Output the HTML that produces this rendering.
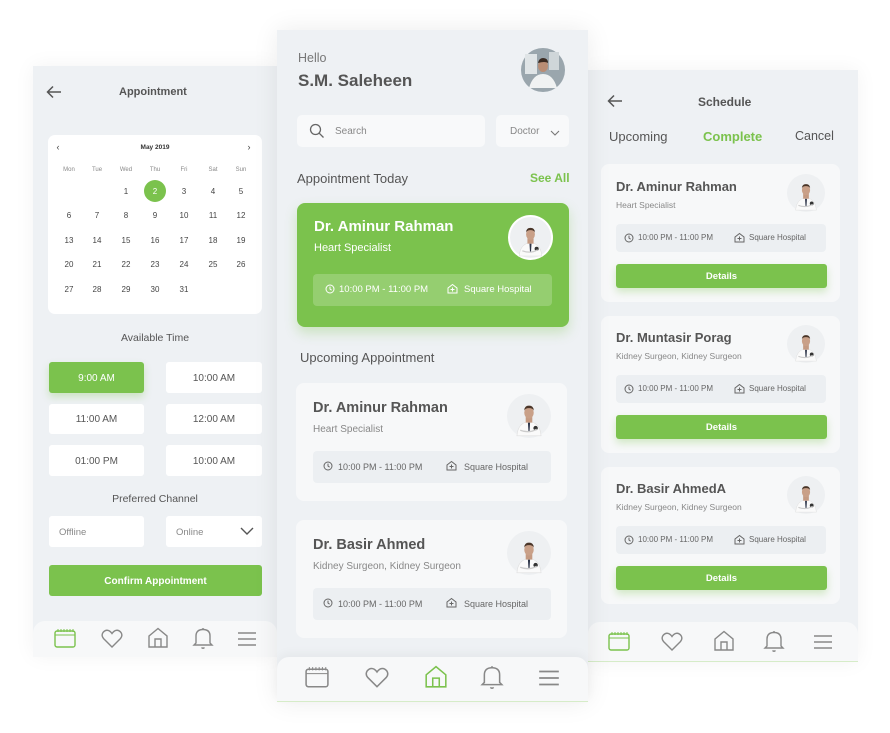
<!DOCTYPE html><html><head><meta charset="utf-8"><style>
*{margin:0;padding:0;box-sizing:border-box}
body{width:890px;height:733px;background:#fff;font-family:"Liberation Sans",sans-serif;color:#555;position:relative;overflow:hidden}
.a{position:absolute}
.panel{position:absolute;background:#eef1f4}
.t{position:absolute;white-space:nowrap}
.w{background:#fff;border-radius:3px;position:absolute}
.g{background:#7bc24d;position:absolute;border-radius:3px;color:#fff;text-align:center;padding-top:2px}
.cal span{position:absolute;width:20px;text-align:center;font-size:8px;color:#444}
.cal .h{font-size:6px;color:#888}
.card{position:absolute;background:#f7f8f9;border-radius:8px}
.box{position:absolute;background:#eceff2;border-radius:4px;font-size:9px;color:#666}
.nav{position:absolute;background:#f7f8f9}
</style></head><body>
<svg width="0" height="0" style="position:absolute"><defs>
<g id="doc"><circle cx="20" cy="20" r="20" fill="#eef0f2"/><path d="M9 38 Q10 26 20 25 Q30 26 31 38 Z" fill="#fafafa" stroke="#ddd" stroke-width=".5"/><path d="M19 26 L21 26 L20.5 34 L19.5 34Z" fill="#2c3448"/><rect x="17" y="21" width="6" height="5" fill="#c49a82"/><ellipse cx="20" cy="17" rx="4.3" ry="5.3" fill="#c9a088"/><path d="M15.6 15 Q16 10.5 20 10.6 Q24 10.5 24.4 15 Q23 12.6 20 12.8 Q17 12.6 15.6 15Z" fill="#4a3528"/><circle cx="26" cy="31" r="2" fill="#333"/><path d="M12 33 Q20 36 27 32" stroke="#ccc" stroke-width="1.2" fill="none"/></g>
<g id="clk"><circle cx="5" cy="5" r="4" fill="none" stroke="currentColor" stroke-width="1"/><path d="M5 2.6V5L6.6 6.2" fill="none" stroke="currentColor" stroke-width="1"/></g>
<g id="hos"><path d="M1 5L5.5 1.5L10 5V10H1Z" fill="none" stroke="currentColor" stroke-width="1"/><path d="M5.5 4.5V8.5M3.5 6.5H7.5" stroke="currentColor" stroke-width="1"/></g>
</defs></svg>

<!-- LEFT PANEL -->
<div class="panel" style="left:33px;top:66px;width:244px;height:590px;box-shadow:0 0 20px rgba(0,0,0,.05)"></div>
<svg class="a" style="left:46px;top:85px" width="16" height="14"><path d="M15 7H2M7 1.5L1.5 7L7 12.5" stroke="#555" stroke-width="1.5" fill="none"/></svg>
<div class="t" style="left:119px;top:86px;font-size:11px;font-weight:bold;color:#555">Appointment</div>
<div class="w cal" style="left:48px;top:135px;width:214px;height:179px;border-radius:7px">
<span style="left:0;top:7px;font-size:9px">‹</span><span style="left:191px;top:7px;font-size:9px">›</span>
<div class="t" style="left:0;width:214px;text-align:center;top:9px;font-size:6.5px;color:#333;font-weight:bold">May 2019</div>
<span class="h" style="left:11px;top:32px">Mon</span><span class="h" style="left:39px;top:32px">Tue</span><span class="h" style="left:68px;top:32px">Wed</span><span class="h" style="left:97px;top:32px">Thu</span><span class="h" style="left:126px;top:32px">Fri</span><span class="h" style="left:155px;top:32px">Sat</span><span class="h" style="left:183px;top:32px">Sun</span>
<div class="a" style="left:96px;top:45px;width:22px;height:22px;border-radius:50%;background:#7bc24d"></div>
<span style="left:68px;top:52px">1</span><span style="left:97px;top:52px;color:#fff">2</span><span style="left:126px;top:52px">3</span><span style="left:155px;top:52px">4</span><span style="left:183px;top:52px">5</span>
<span style="left:11px;top:76px">6</span><span style="left:39px;top:76px">7</span><span style="left:68px;top:76px">8</span><span style="left:97px;top:76px">9</span><span style="left:126px;top:76px">10</span><span style="left:155px;top:76px">11</span><span style="left:183px;top:76px">12</span>
<span style="left:11px;top:101px">13</span><span style="left:39px;top:101px">14</span><span style="left:68px;top:101px">15</span><span style="left:97px;top:101px">16</span><span style="left:126px;top:101px">17</span><span style="left:155px;top:101px">18</span><span style="left:183px;top:101px">19</span>
<span style="left:11px;top:125px">20</span><span style="left:39px;top:125px">21</span><span style="left:68px;top:125px">22</span><span style="left:97px;top:125px">23</span><span style="left:126px;top:125px">24</span><span style="left:155px;top:125px">25</span><span style="left:183px;top:125px">26</span>
<span style="left:11px;top:150px">27</span><span style="left:39px;top:150px">28</span><span style="left:68px;top:150px">29</span><span style="left:97px;top:150px">30</span><span style="left:126px;top:150px">31</span>
</div>
<div class="t" style="left:33px;width:244px;text-align:center;top:332px;font-size:10.5px">Available Time</div>
<div class="g" style="left:49px;top:362px;width:95px;height:31px;line-height:29px;font-size:10px;box-shadow:0 4px 8px rgba(123,194,77,.3)">9:00 AM</div>
<div class="w" style="left:166px;top:362px;width:96px;height:31px;line-height:33px;text-align:center;font-size:10px">10:00 AM</div>
<div class="w" style="left:49px;top:404px;width:95px;height:30px;line-height:32px;text-align:center;font-size:10px">11:00 AM</div>
<div class="w" style="left:166px;top:404px;width:96px;height:30px;line-height:32px;text-align:center;font-size:10px">12:00 AM</div>
<div class="w" style="left:49px;top:445px;width:95px;height:31px;line-height:33px;text-align:center;font-size:10px">01:00 PM</div>
<div class="w" style="left:166px;top:445px;width:96px;height:31px;line-height:33px;text-align:center;font-size:10px">10:00 AM</div>
<div class="t" style="left:33px;width:244px;text-align:center;top:493px;font-size:10.5px">Preferred Channel</div>
<div class="w" style="left:49px;top:516px;width:95px;height:31px;line-height:33px;padding-left:10px;font-size:9.5px;color:#888">Offline</div>
<div class="w" style="left:166px;top:516px;width:96px;height:31px;line-height:33px;padding-left:10px;font-size:9.5px;color:#888">Online</div>
<svg class="a" style="left:240px;top:527px" width="14" height="9"><path d="M1 1L7 7L13 1" stroke="#555" stroke-width="1.4" fill="none"/></svg>
<div class="g" style="left:49px;top:565px;width:213px;height:31px;line-height:29px;font-size:10px;font-weight:bold">Confirm Appointment</div>
<div class="nav" style="left:33px;top:621px;width:244px;height:36px;border-radius:12px 12px 0 0"></div>

<!-- RIGHT PANEL -->
<div class="panel" style="left:588px;top:70px;width:270px;height:592px;box-shadow:0 0 20px rgba(0,0,0,.05)"></div>
<svg class="a" style="left:607px;top:94px" width="16" height="14"><path d="M15 7H2M7 1.5L1.5 7L7 12.5" stroke="#555" stroke-width="1.5" fill="none"/></svg>
<div class="t" style="left:698px;top:95px;font-size:12px;font-weight:bold">Schedule</div>
<div class="t" style="left:609px;top:129px;font-size:13px">Upcoming</div>
<div class="t" style="left:703px;top:129px;font-size:13px;color:#7bc24d;font-weight:bold">Complete</div>
<div class="t" style="left:795px;top:129px;font-size:12.5px">Cancel</div>

<div class="card" style="left:601px;top:164px;width:239px;height:138px"></div>
<div class="t" style="left:616px;top:179px;font-size:13px;font-weight:bold">Dr. Aminur Rahman</div>
<div class="t" style="left:616px;top:200px;font-size:8.5px;color:#888">Heart Specialist</div>
<svg class="a" style="left:787px;top:174px" width="38" height="38" viewBox="0 0 40 40"><use href="#doc"/></svg>
<div class="box" style="left:616px;top:224px;width:210px;height:28px"><svg class="a" style="left:8px;top:9px;color:#666" width="11" height="11"><use href="#clk"/></svg><span class="t" style="left:22px;top:9px;font-size:8px">10:00 PM - 11:00 PM</span><svg class="a" style="left:118px;top:8px;color:#666" width="11" height="11"><use href="#hos"/></svg><span class="t" style="left:133px;top:9px;font-size:8px">Square Hospital</span></div>
<div class="g" style="left:616px;top:264px;width:211px;height:24px;line-height:22px;font-size:9.5px;font-weight:bold;box-shadow:0 4px 8px rgba(123,194,77,.3)">Details</div>

<div class="card" style="left:601px;top:316px;width:239px;height:137px"></div>
<div class="t" style="left:616px;top:330px;font-size:13px;font-weight:bold">Dr. Muntasir Porag</div>
<div class="t" style="left:616px;top:351px;font-size:8.5px;color:#888">Kidney Surgeon, Kidney Surgeon</div>
<svg class="a" style="left:787px;top:325px" width="38" height="38" viewBox="0 0 40 40"><use href="#doc"/></svg>
<div class="box" style="left:616px;top:375px;width:210px;height:28px"><svg class="a" style="left:8px;top:9px;color:#666" width="11" height="11"><use href="#clk"/></svg><span class="t" style="left:22px;top:9px;font-size:8px">10:00 PM - 11:00 PM</span><svg class="a" style="left:118px;top:8px;color:#666" width="11" height="11"><use href="#hos"/></svg><span class="t" style="left:133px;top:9px;font-size:8px">Square Hospital</span></div>
<div class="g" style="left:616px;top:415px;width:211px;height:24px;line-height:22px;font-size:9.5px;font-weight:bold;box-shadow:0 4px 8px rgba(123,194,77,.3)">Details</div>

<div class="card" style="left:601px;top:467px;width:239px;height:137px"></div>
<div class="t" style="left:616px;top:481px;font-size:13px;font-weight:bold">Dr. Basir AhmedA</div>
<div class="t" style="left:616px;top:502px;font-size:8.5px;color:#888">Kidney Surgeon, Kidney Surgeon</div>
<svg class="a" style="left:787px;top:476px" width="38" height="38" viewBox="0 0 40 40"><use href="#doc"/></svg>
<div class="box" style="left:616px;top:526px;width:210px;height:28px"><svg class="a" style="left:8px;top:9px;color:#666" width="11" height="11"><use href="#clk"/></svg><span class="t" style="left:22px;top:9px;font-size:8px">10:00 PM - 11:00 PM</span><svg class="a" style="left:118px;top:8px;color:#666" width="11" height="11"><use href="#hos"/></svg><span class="t" style="left:133px;top:9px;font-size:8px">Square Hospital</span></div>
<div class="g" style="left:616px;top:566px;width:211px;height:24px;line-height:22px;font-size:9.5px;font-weight:bold;box-shadow:0 4px 8px rgba(123,194,77,.3)">Details</div>
<div class="nav" style="left:588px;top:622px;width:270px;height:40px;border-radius:12px 12px 0 0;border-bottom:1px solid #d6ecc8"></div>

<!-- MIDDLE PANEL -->
<div class="panel" style="left:277px;top:30px;width:311px;height:672px;box-shadow:0 0 24px rgba(0,0,0,.08)"></div>
<div class="t" style="left:298px;top:51px;font-size:12.5px;color:#777">Hello</div>
<div class="t" style="left:298px;top:71px;font-size:17px;font-weight:bold">S.M. Saleheen</div>
<svg class="a" style="left:521px;top:48px" width="44" height="44"><circle cx="22" cy="22" r="22" fill="#9aa6ad"/><rect x="4" y="6" width="12" height="20" fill="#dfe4e6"/><rect x="28" y="4" width="10" height="18" fill="#cfd6d9"/><ellipse cx="22" cy="18" rx="5" ry="6" fill="#b98d74"/><path d="M17 15Q18 10 22 10Q27 10 27 15Q24 13 17 15Z" fill="#3a2b22"/><path d="M8 40Q12 26 22 26Q32 26 36 40Z" fill="#f0f2f2"/></svg>
<div class="w" style="left:297px;top:115px;width:188px;height:32px;background:#f8f9fa;border-radius:5px"></div>
<svg class="a" style="left:309px;top:123px" width="16" height="16"><circle cx="6.5" cy="6.5" r="5" fill="none" stroke="#666" stroke-width="1.3"/><path d="M10.2 10.2L14.5 14.5" stroke="#666" stroke-width="1.3"/></svg>
<div class="t" style="left:335px;top:126px;font-size:10px;color:#888">Search</div>
<div class="w" style="left:496px;top:115px;width:73px;height:32px;background:#f8f9fa;border-radius:5px"></div>
<div class="t" style="left:510px;top:126px;font-size:10px;color:#888">Doctor</div>
<svg class="a" style="left:550px;top:130px" width="10" height="7"><path d="M1 1L5 5L9 1" stroke="#777" stroke-width="1.1" fill="none"/></svg>
<div class="t" style="left:297px;top:171px;font-size:13px">Appointment Today</div>
<div class="t" style="left:530px;top:171px;font-size:12px;color:#7bc24d;font-weight:bold">See All</div>
<div class="a" style="left:297px;top:203px;width:272px;height:124px;background:#7bc24d;border-radius:8px;box-shadow:0 6px 12px rgba(123,194,77,.3)"></div>
<div class="t" style="left:314px;top:218px;font-size:15px;font-weight:bold;color:#fff">Dr. Aminur Rahman</div>
<div class="t" style="left:314px;top:242px;font-size:11px;color:#fff">Heart Specialist</div>
<div class="a" style="left:508px;top:215px;width:45px;height:45px;border-radius:50%;background:#fff"></div>
<svg class="a" style="left:510px;top:217px" width="41" height="41" viewBox="0 0 40 40"><circle cx="20" cy="20" r="20" fill="#fff"/><use href="#doc"/></svg>
<div class="a" style="left:313px;top:274px;width:239px;height:32px;background:rgba(255,255,255,.2);border-radius:4px;color:#fff"><svg class="a" style="left:12px;top:10px" width="11" height="11"><use href="#clk"/></svg><span class="t" style="left:26px;top:10px;font-size:9.5px">10:00 PM - 11:00 PM</span><svg class="a" style="left:134px;top:9px" width="11" height="11"><use href="#hos"/></svg><span class="t" style="left:151px;top:10px;font-size:9.5px">Square Hospital</span></div>
<div class="t" style="left:300px;top:350px;font-size:13px">Upcoming Appointment</div>

<div class="card" style="left:296px;top:383px;width:271px;height:118px"></div>
<div class="t" style="left:313px;top:400px;font-size:14.5px;font-weight:bold">Dr. Aminur Rahman</div>
<div class="t" style="left:313px;top:424px;font-size:10px;color:#888">Heart Specialist</div>
<svg class="a" style="left:507px;top:394px" width="44" height="44" viewBox="0 0 40 40"><use href="#doc"/></svg>
<div class="box" style="left:313px;top:451px;width:238px;height:32px"><svg class="a" style="left:10px;top:10px;color:#666" width="11" height="11"><use href="#clk"/></svg><span class="t" style="left:25px;top:11px;font-size:9px">10:00 PM - 11:00 PM</span><svg class="a" style="left:133px;top:9px;color:#666" width="11" height="11"><use href="#hos"/></svg><span class="t" style="left:151px;top:11px;font-size:9px">Square Hospital</span></div>

<div class="card" style="left:296px;top:520px;width:271px;height:118px"></div>
<div class="t" style="left:313px;top:537px;font-size:14.5px;font-weight:bold">Dr. Basir Ahmed</div>
<div class="t" style="left:313px;top:561px;font-size:10px;color:#888">Kidney Surgeon, Kidney Surgeon</div>
<svg class="a" style="left:507px;top:531px" width="44" height="44" viewBox="0 0 40 40"><use href="#doc"/></svg>
<div class="box" style="left:313px;top:588px;width:238px;height:32px"><svg class="a" style="left:10px;top:10px;color:#666" width="11" height="11"><use href="#clk"/></svg><span class="t" style="left:25px;top:11px;font-size:9px">10:00 PM - 11:00 PM</span><svg class="a" style="left:133px;top:9px;color:#666" width="11" height="11"><use href="#hos"/></svg><span class="t" style="left:151px;top:11px;font-size:9px">Square Hospital</span></div>
<div class="nav" style="left:277px;top:657px;width:311px;height:45px;border-radius:12px 12px 0 0;border-bottom:1px solid #d6ecc8;box-shadow:0 -4px 10px rgba(0,0,0,.04)"></div>

<!-- NAV ICONS -->
<svg width="0" height="0" style="position:absolute"><defs>
<g id="ical" fill="none" stroke-width="1.4"><rect x="1" y="3" width="20" height="16" rx="2"/><path d="M1 7H21M4 1V4M7 1V4M10 1V4M13 1V4M16 1V4M19 1V4" stroke-width="1"/></g>
<g id="ihrt" fill="none" stroke-width="1.4"><path d="M11 19L2.5 10.5Q0 7.5 2 4.5Q5 1 8.5 3Q10 4 11 5.5Q12 4 13.5 3Q17 1 20 4.5Q22 7.5 19.5 10.5Z"/></g>
<g id="ihom" fill="none" stroke-width="1.4"><path d="M2 9L11 1.5L20 9V20H2Z"/><path d="M8 20V12H14V20"/></g>
<g id="ibel" fill="none" stroke-width="1.4"><path d="M4 16V9Q4 2.5 11 2.5Q18 2.5 18 9V16L20 18H2Z"/><path d="M11 1V2.5M9.5 20.5Q11 22 12.5 20.5"/></g>
<g id="imen" fill="none" stroke-width="1.6"><path d="M2 5H20M2 11H20M2 17H20"/></g>
</defs></svg>
<svg class="a" style="left:54px;top:628px;stroke:#7bc24d" width="22" height="22"><use href="#ical"/></svg>
<svg class="a" style="left:101px;top:628px;stroke:#888" width="22" height="22"><use href="#ihrt"/></svg>
<svg class="a" style="left:147px;top:627px;stroke:#888" width="22" height="22"><use href="#ihom"/></svg>
<svg class="a" style="left:192px;top:627px;stroke:#888" width="22" height="22"><use href="#ibel"/></svg>
<svg class="a" style="left:236px;top:628px;stroke:#888" width="22" height="22"><use href="#imen"/></svg>

<svg class="a" style="left:305px;top:666px;stroke:#888" width="24" height="24" viewBox="0 0 22 22"><use href="#ical"/></svg>
<svg class="a" style="left:365px;top:666px;stroke:#888" width="24" height="24" viewBox="0 0 22 22"><use href="#ihrt"/></svg>
<svg class="a" style="left:424px;top:665px;stroke:#7bc24d" width="24" height="24" viewBox="0 0 22 22"><use href="#ihom"/></svg>
<svg class="a" style="left:480px;top:665px;stroke:#888" width="24" height="24" viewBox="0 0 22 22"><use href="#ibel"/></svg>
<svg class="a" style="left:537px;top:666px;stroke:#888" width="24" height="24" viewBox="0 0 22 22"><use href="#imen"/></svg>

<svg class="a" style="left:608px;top:631px;stroke:#7bc24d" width="22" height="22"><use href="#ical"/></svg>
<svg class="a" style="left:661px;top:631px;stroke:#888" width="22" height="22"><use href="#ihrt"/></svg>
<svg class="a" style="left:713px;top:630px;stroke:#888" width="22" height="22"><use href="#ihom"/></svg>
<svg class="a" style="left:763px;top:630px;stroke:#888" width="22" height="22"><use href="#ibel"/></svg>
<svg class="a" style="left:812px;top:631px;stroke:#888" width="22" height="22"><use href="#imen"/></svg>
</body></html>
